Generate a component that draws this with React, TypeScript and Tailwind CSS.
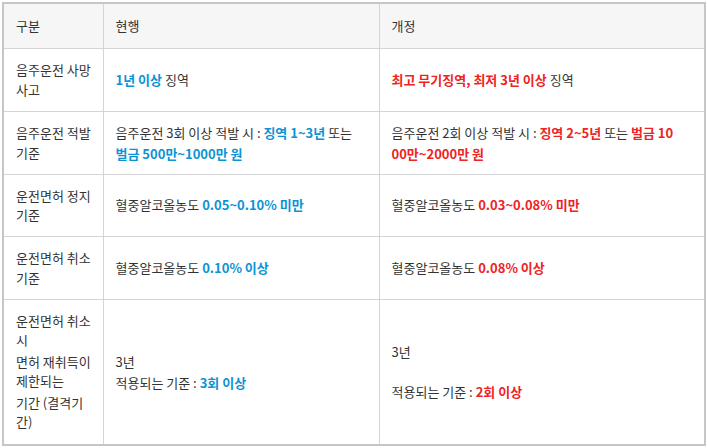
import React from "react";

const B = ({ children }: { children: React.ReactNode }) => (
  <b className="font-bold text-[#0b93d5]">{children}</b>
);
const R = ({ children }: { children: React.ReactNode }) => (
  <b className="font-bold text-[#ee2323]">{children}</b>
);

const td = "border border-[#d5d5d5] px-[12px] align-middle whitespace-nowrap";

export default function App() {
  return (
    <div
      className="p-[2px] text-[13px] leading-[19.5px] text-[#333]"
      style={{ fontFamily: '"Noto Sans CJK KR", "Noto Sans", sans-serif' }}
    >
      <table className="w-[702px] table-fixed border-collapse border-2 border-[#c6c6c6]">
        <colgroup>
          <col className="w-[100px]" />
          <col className="w-[276px]" />
          <col className="w-[326px]" />
        </colgroup>
        <tbody>
          <tr className="h-[45px] bg-[#f6f6f6]">
            <td className={td}>구분</td>
            <td className={td}>현행</td>
            <td className={td}>개정</td>
          </tr>
          <tr className="h-[63px]">
            <td className={td}>
              음주운전 사망
              <br />
              사고
            </td>
            <td className={td}>
              <B>1년 이상</B> 징역
            </td>
            <td className={td}>
              <R>최고 무기징역, 최저 3년 이상</R> 징역
            </td>
          </tr>
          <tr className="h-[63px]">
            <td className={td}>
              음주운전 적발
              <br />
              기준
            </td>
            <td className={`${td} leading-[21px]`}>
              음주운전 3회 이상 적발 시 : <B>징역 1~3년</B> 또는
              <br />
              <B>벌금 500만~1000만 원</B>
            </td>
            <td className={`${td} leading-[21px]`}>
              음주운전 2회 이상 적발 시 : <R>징역 2~5년</R> 또는 <R>벌금 10</R>
              <br />
              <R>00만~2000만 원</R>
            </td>
          </tr>
          <tr className="h-[62px]">
            <td className={td}>
              운전면허 정지
              <br />
              기준
            </td>
            <td className={td}>
              혈중알코올농도 <B>0.05~0.10% 미만</B>
            </td>
            <td className={td}>
              혈중알코올농도 <R>0.03~0.08% 미만</R>
            </td>
          </tr>
          <tr className="h-[63px]">
            <td className={td}>
              운전면허 취소
              <br />
              기준
            </td>
            <td className={td}>
              혈중알코올농도 <B>0.10% 이상</B>
            </td>
            <td className={td}>
              혈중알코올농도 <R>0.08% 이상</R>
            </td>
          </tr>
          <tr className="h-[146px]">
            <td className={`${td} leading-[18.5px]`}>
              <p>
                운전면허 취소
                <br />시
              </p>
              <p className="mt-[4px]">
                면허 재취득이
                <br />
                제한되는
              </p>
              <p className="mt-[4px]">
                기간 (결격기
                <br />
                간)
              </p>
            </td>
            <td className={`${td} leading-[21px]`}>
              <p>3년</p>
              <p>
                적용되는 기준 : <B>3회 이상</B>
              </p>
            </td>
            <td className={`${td} leading-[20px]`}>
              <p>3년</p>
              <p>&nbsp;</p>
              <p>
                적용되는 기준 : <R>2회 이상</R>
              </p>
            </td>
          </tr>
        </tbody>
      </table>
    </div>
  );
}
